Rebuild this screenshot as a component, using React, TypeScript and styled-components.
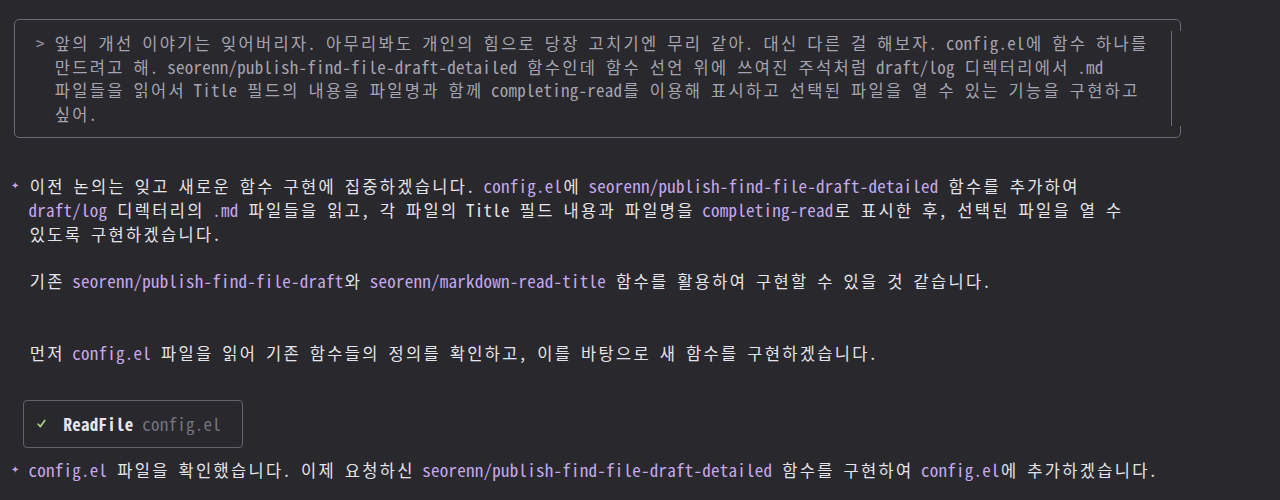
import React from 'react';
import styled, { createGlobalStyle } from 'styled-components';

const R = 23.8;
const HALF = R / 2;
const CELL = 8.75;
const BG = '#29282d';

const Global = createGlobalStyle`
  html, body { margin: 0; padding: 0; background: ${BG}; }
  body {
    font-family: "Noto Sans Mono CJK KR", "Noto Sans CJK KR", "DejaVu Sans Mono", monospace;
    font-size: 17px;
    line-height: ${R}px;
    letter-spacing: 0.25px;
    color: #e4e4ea;
  }
`;

const Screen = styled.div`
  height: 500px;
  overflow: hidden;
  box-sizing: border-box;
  padding: 19px 0 0 10px;
`;

const UserBox = styled.div`
  position: relative;
  margin-left: 4px;
  width: 1167px;
  box-sizing: border-box;
  border: 1px solid #6a6976;
  border-radius: 5px;
  padding: ${HALF - 1}px 0 ${HALF - 1}px 21px;
  display: flex;
  color: #a5a4b0;
  &::before {
    content: '';
    position: absolute;
    right: -2px;
    top: 11px;
    bottom: 11px;
    width: 3px;
    background: ${BG};
  }
  &::after {
    content: '';
    position: absolute;
    right: 8px;
    top: 11px;
    bottom: 11px;
    width: 1px;
    background: #6a6976;
  }
`;

const Prompt = styled.div`
  flex: 0 0 ${2 * CELL}px;
  color: #9a99a6;
`;

const Lines = styled.div`
  display: flex;
  flex-direction: column;
`;

const Line = styled.div`
  height: ${R}px;
  white-space: pre;
`;

const Blank = styled.div`
  height: ${R}px;
`;

const Message = styled.div<{ $gap: number }>`
  display: flex;
  margin-top: ${(p) => p.$gap}px;
`;

const Star = styled.div`
  flex: 0 0 ${2 * CELL}px;
  color: #c7a2f2;
  font-family: "DejaVu Sans", sans-serif;
  font-size: 10px;
  letter-spacing: 0;
  padding-left: 1px;
`;

const Code = styled.span`
  color: #c6a8ee;
`;

const WideCell = styled.span`
  display: inline-block;
  width: ${2 * CELL}px;
  text-align: center;
  letter-spacing: 0;
  font-size: 16.5px;
`;

const ToolBox = styled.div`
  margin: 35px 0 0 13px;
  width: 220px;
  height: 48px;
  box-sizing: border-box;
  border: 1px solid #62616d;
  border-radius: 4px;
  padding: 11.1px 0 11.1px 12.25px;
  display: flex;
`;

const Check = styled.span`
  flex: 0 0 ${3 * CELL}px;
  display: flex;
  align-items: center;
  padding-left: 1px;
  svg { display: block; }
`;

const ToolName = styled.span`
  font-weight: 700;
  color: #e4e4f2;
`;

const ToolArg = styled.span`
  color: #76757f;
`;

const HANGUL = /([\u1100-\u11FF\u3130-\u318F\uAC00-\uD7A3]+)/;

function Txt({ s }: { s: string }) {
  const parts = s.split(HANGUL);
  return (
    <>
      {parts.map((p, i) =>
        p === '' ? null : i % 2 === 1 ? (
          <React.Fragment key={i}>
            {Array.from(p).map((c, j) => (
              <WideCell key={j}>{c}</WideCell>
            ))}
          </React.Fragment>
        ) : (
          <React.Fragment key={i}>{p}</React.Fragment>
        )
      )}
    </>
  );
}

function Rich({ s }: { s: string }) {
  const parts = s.split('`');
  return (
    <>
      {parts.map((p, i) =>
        i % 2 === 1 ? (
          <Code key={i}>
            <Txt s={p} />
          </Code>
        ) : (
          <Txt key={i} s={p} />
        )
      )}
    </>
  );
}

const userLines = [
  '앞의 개선 이야기는 잊어버리자. 아무리봐도 개인의 힘으로 당장 고치기엔 무리 같아. 대신 다른 걸 해보자. config.el에 함수 하나를',
  '만드려고 해. seorenn/publish-find-file-draft-detailed 함수인데 함수 선언 위에 쓰여진 주석처럼 draft/log 디렉터리에서 .md',
  '파일들을 읽어서 Title 필드의 내용을 파일명과 함께 completing-read를 이용해 표시하고 선택된 파일을 열 수 있는 기능을 구현하고',
  '싶어.',
];

const replyLines: (string | null)[] = [
  '이전 논의는 잊고 새로운 함수 구현에 집중하겠습니다. `config.el`에 `seorenn/publish-find-file-draft-detailed` 함수를 추가하여',
  '`draft/log` 디렉터리의 `.md` 파일들을 읽고, 각 파일의 Title 필드 내용과 파일명을 `completing-read`로 표시한 후, 선택된 파일을 열 수',
  '있도록 구현하겠습니다.',
  null,
  '기존 `seorenn/publish-find-file-draft`와 `seorenn/markdown-read-title` 함수를 활용하여 구현할 수 있을 것 같습니다.',
  null,
  null,
  '먼저 `config.el` 파일을 읽어 기존 함수들의 정의를 확인하고, 이를 바탕으로 새 함수를 구현하겠습니다.',
];

export default function App() {
  return (
    <>
      <Global />
      <Screen>
        <UserBox>
          <Prompt>&gt;</Prompt>
          <Lines>
            {userLines.map((l, i) => (
              <Line key={i}>
                <Txt s={l} />
              </Line>
            ))}
          </Lines>
        </UserBox>

        <Message $gap={R + HALF + 0.5}>
          <Star>✦</Star>
          <Lines>
            {replyLines.map((l, i) =>
              l === null ? (
                <Blank key={i} />
              ) : (
                <Line key={i}>
                  <Rich s={l} />
                </Line>
              )
            )}
          </Lines>
        </Message>

        <ToolBox>
          <Check>
            <svg width="9" height="9" viewBox="0 0 9 9">
              <path d="M1.2 5.2 L3.4 7.6 L7.8 1.4" fill="none" stroke="#a3d487" strokeWidth="1.7" strokeLinecap="round" strokeLinejoin="round" />
            </svg>
          </Check>
          <Line>
            <ToolName>ReadFile</ToolName> <ToolArg>config.el</ToolArg>
          </Line>
        </ToolBox>

        <Message $gap={HALF - 1}>
          <Star>✦</Star>
          <Lines>
            <Line>
              <Rich s="`config.el` 파일을 확인했습니다. 이제 요청하신 `seorenn/publish-find-file-draft-detailed` 함수를 구현하여 `config.el`에 추가하겠습니다." />
            </Line>
          </Lines>
        </Message>
      </Screen>
    </>
  );
}
